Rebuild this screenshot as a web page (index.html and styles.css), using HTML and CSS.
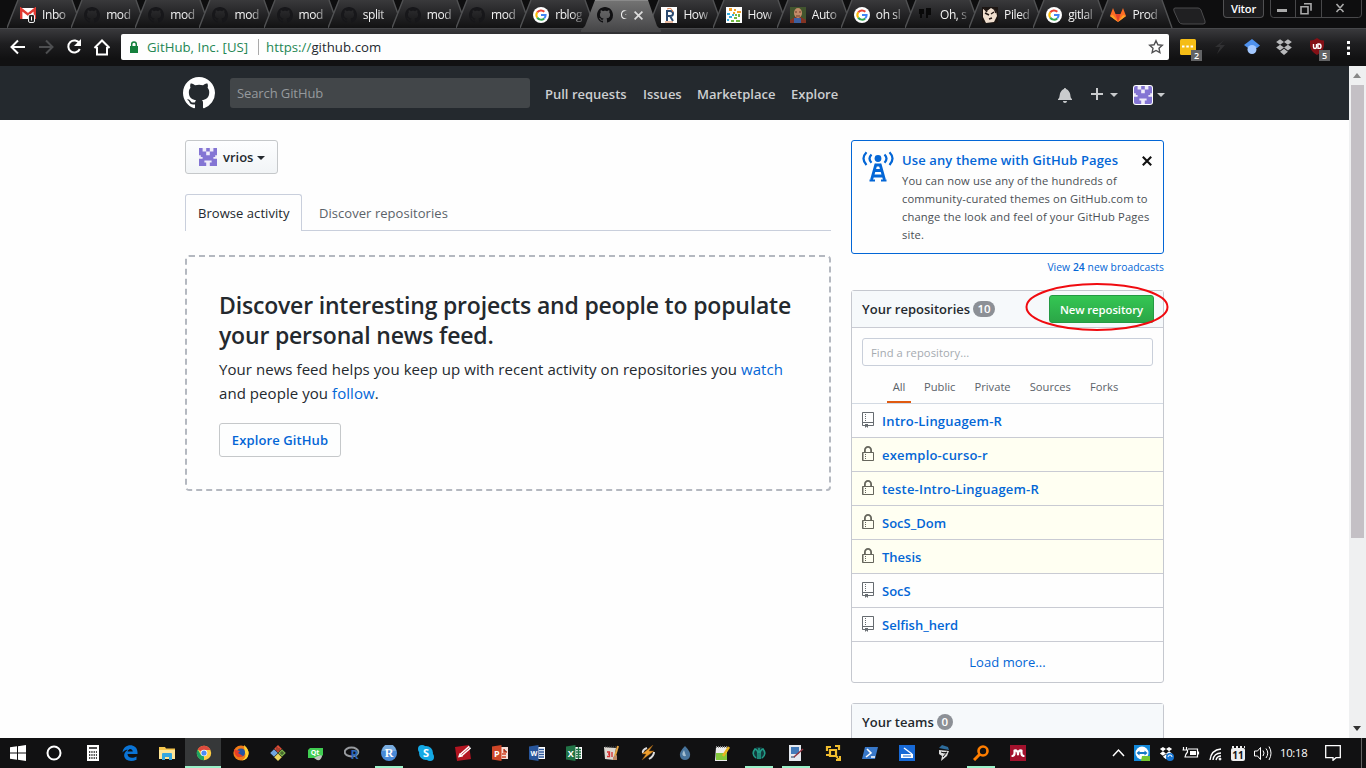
FILE: index.html
```html
<!DOCTYPE html>
<html lang="en">
<head>
<meta charset="utf-8">
<title>GitHub</title>
<link rel="stylesheet" href="styles.css">
</head>
<body>
<svg class="defs" width="0" height="0">
  <defs>
    <linearGradient id="tabfill" x1="0" y1="0" x2="0" y2="1"><stop offset="0" stop-color="#39393b"/><stop offset=".5" stop-color="#242426"/><stop offset="1" stop-color="#121213"/></linearGradient>
    <linearGradient id="activefill" x1="0" y1="0" x2="0" y2="1"><stop offset="0" stop-color="#747474"/><stop offset="1" stop-color="#454547"/></linearGradient>
  </defs>
  <symbol id="tab" viewBox="0 0 76 28"><path d="M0 28 11 0H65L75 28z" fill="url(#tabfill)"/><path d="M0 28 11 0M65 0 75 28" fill="none" stroke="#505153" stroke-width="1.4"/></symbol>
  <symbol id="tab-active" viewBox="0 0 80 32"><path d="M0 30 4 26 14 0H67L76 26 80 30v2H0z" fill="url(#activefill)"/><path d="M14 .5H67" stroke="#8a8a8a"/></symbol>
  <symbol id="mark" viewBox="0 0 16 16"><path fill="currentColor" fill-rule="evenodd" d="M8 0C3.58 0 0 3.58 0 8c0 3.54 2.29 6.53 5.47 7.59.4.07.55-.17.55-.38 0-.19-.01-.82-.01-1.49-2.01.37-2.53-.49-2.69-.94-.09-.23-.48-.94-.82-1.13-.28-.15-.68-.52-.01-.53.63-.01 1.08.58 1.23.82.72 1.21 1.87.87 2.33.66.07-.52.28-.87.51-1.07-1.78-.2-3.64-.89-3.64-3.95 0-.87.31-1.59.82-2.15-.08-.2-.36-1.02.08-2.12 0 0 .67-.21 2.2.82.64-.18 1.32-.27 2-.27.68 0 1.36.09 2 .27 1.53-1.04 2.2-.82 2.2-.82.44 1.1.16 1.92.08 2.12.51.56.82 1.27.82 2.15 0 3.07-1.87 3.75-3.65 3.95.29.25.54.73.54 1.48 0 1.07-.01 1.93-.01 2.2 0 .21.15.46.55.38A8.013 8.013 0 0 0 16 8c0-4.42-3.58-8-8-8z"/></symbol>
  <symbol id="google" viewBox="0 0 16 16"><circle cx="8" cy="8" r="8" fill="#fff"/><g fill="none" stroke-width="2"><path d="M4.2 5.4A4.6 4.6 0 0 1 11.3 4.8" stroke="#ea4335"/><path d="M4.2 5.4a4.6 4.6 0 0 0 0 5.2" stroke="#fbbc05"/><path d="M4.2 10.6a4.6 4.6 0 0 0 7 .8" stroke="#34a853"/><path d="M11.2 11.4A4.6 4.6 0 0 0 12.6 8H8" stroke="#4285f4"/></g></symbol>
  <symbol id="repo" viewBox="0 0 12 16"><path fill="#666b70" d="M4 9H3V8h1v1zm0-3H3v1h1V6zm0-2H3v1h1V4zm0-2H3v1h1V2zm8-1v12c0 .55-.45 1-1 1H6v2l-1.500-1.500L3 16v-2H1c-.55 0-1-.45-1-1V1c0-.55.45-1 1-1h10c.55 0 1 .45 1 1zm-1 10H1v2h2v-1h3v1h5v-2zm0-10H1v9h10V1z"/></symbol>
  <symbol id="lock" viewBox="0 0 12 16"><path fill="#66665c" fill-rule="evenodd" d="M4 13H3v-1h1v1zm8-6v7c0 .55-.45 1-1 1H1c-.55 0-1-.45-1-1V7c0-.55.45-1 1-1h1V4c0-2.200 1.800-4 4-4s4 1.800 4 4v2h1c.55 0 1 .45 1 1zM3.800 6h4.410V4c0-1.220-.98-2.200-2.200-2.200-1.220 0-2.200.98-2.200 2.200v2H3.800zM11 7H1.500v7H11V7zM4 8H3v1h1V8zm0 2H3v1h1v-1z"/></symbol>
  <symbol id="identicon" viewBox="0 0 10 10"><path fill="#f0edfa" d="M0 0h10v10H0z"/><path fill="#8475d4" d="M0 0h2v4H0zM8 0h2v4H8zM4 0h2v2H4zM2 2h2v2H2zM6 2h2v2H6zM1 4h3v1H1zM6 4h3v1H6zM4 4h2v2H4zM2 5h6v2H2zM0 6h3v2H0zM7 6h3v2H7zM0 8h4v2H0zM6 8h4v2H6z"/></symbol>
  <symbol id="dropbox" viewBox="0 0 16 16"><path fill="currentColor" d="M4.500 1 8 3.500 4.500 6 1 3.500zM11.500 1 15 3.500 11.500 6 8 3.500zM4.500 6 8 8.500 4.500 11 1 8.500zM11.500 6 15 8.500 11.500 11 8 8.500zM8 9.500l3.500 2.700L8 15l-3.500-2.800z"/></symbol>
</svg>

<header class="browser">
  <div class="tabstrip">
    <div class="tabs">
      <div class="tab"><svg class="shape"><use href="#tab"/></svg><svg class="fav" viewBox="0 0 16 16"><path fill="#fff" d="M0 1h16v11H0z"/><path fill="none" stroke="#e03a32" stroke-width="2.400" d="M1.200 12V2L8 7.500 14.800 2v10"/><rect x="8.500" y="7.500" width="6" height="8" rx="1.500" fill="#222" stroke="#eee"/><path stroke="#fff" d="M11.500 9.500v4"/></svg><span>Inbo</span></div>
      <div class="tab"><svg class="shape"><use href="#tab"/></svg><svg class="fav"><use href="#mark"/></svg><span>mod</span></div>
      <div class="tab"><svg class="shape"><use href="#tab"/></svg><svg class="fav"><use href="#mark"/></svg><span>mod</span></div>
      <div class="tab"><svg class="shape"><use href="#tab"/></svg><svg class="fav"><use href="#mark"/></svg><span>mod</span></div>
      <div class="tab"><svg class="shape"><use href="#tab"/></svg><svg class="fav"><use href="#mark"/></svg><span>mod</span></div>
      <div class="tab"><svg class="shape"><use href="#tab"/></svg><svg class="fav"><use href="#mark"/></svg><span>split</span></div>
      <div class="tab"><svg class="shape"><use href="#tab"/></svg><svg class="fav"><use href="#mark"/></svg><span>mod</span></div>
      <div class="tab"><svg class="shape"><use href="#tab"/></svg><svg class="fav"><use href="#mark"/></svg><span>mod</span></div>
      <div class="tab"><svg class="shape"><use href="#tab"/></svg><svg class="fav"><use href="#google"/></svg><span>rblog</span></div>
      <div class="tab active"><svg class="shape"><use href="#tab-active"/></svg><svg class="fav"><use href="#mark"/></svg><span class="short">G</span><svg class="close" viewBox="0 0 8 8"><path d="M.5.5l7 7M7.500.5l-7 7" stroke="#ddd" stroke-width="1.500"/></svg></div>
      <div class="tab"><svg class="shape"><use href="#tab"/></svg><svg class="fav" viewBox="0 0 16 16"><path fill="#fff" d="M0 0h16v16H0z"/><path fill="none" stroke="#2b4a70" stroke-width="2" d="M6 14V4h3q3 0 3 2.500T9 9H6M9 9l3 5"/><path fill="none" stroke="#d77b4a" d="M6 2q5-2 6 3M4 15h8"/></svg><span>How</span></div>
      <div class="tab"><svg class="shape"><use href="#tab"/></svg><svg class="fav" viewBox="0 0 16 16"><path fill="#fff" d="M0 0h16v16H0z"/><path fill="#f3a128" d="M3 1h3v3H3zM8 2h2v2H8zM11 4h4v2h-4zM7 5h2v2H7z"/><path fill="#39aee0" d="M1 6h3v2H1zM3 9h3v2H3zM1 12h2v2H1zM6 7h2v2H6z"/><path fill="#73b943" d="M12 7h2v3h-2zM8 10h3v2H8zM5 13h3v2H5zM10 13h4v2h-4zM9 7h2v2H9z"/></svg><span>How</span></div>
      <div class="tab"><svg class="shape"><use href="#tab"/></svg><svg class="fav" viewBox="0 0 16 16"><path fill="#42552e" d="M0 0h16v16H0z"/><path fill="#823323" d="M0 16v-3l5-3h6l5 3v3z"/><path fill="#3d60a0" d="M4 11h7v5H4z"/><ellipse cx="8" cy="6" rx="4" ry="5" fill="#c28c68"/><path stroke="#703d28" d="M5 5h2M9 5h2M6 9h4"/></svg><span>Auto</span></div>
      <div class="tab"><svg class="shape"><use href="#tab"/></svg><svg class="fav"><use href="#google"/></svg><span>oh sl</span></div>
      <div class="tab"><svg class="shape"><use href="#tab"/></svg><svg class="fav" viewBox="0 0 16 16"><path fill="#090909" d="M1 2h5v5H4v4H2V7H1zM8 1h5v7h-3v3H8z"/></svg><span>Oh, s</span></div>
      <div class="tab"><svg class="shape"><use href="#tab"/></svg><svg class="fav" viewBox="0 0 16 16"><path fill="#1b1512" d="M0 0h16v16H0z"/><path fill="#f0dfcf" d="M1 2l4 2 4-3 5 3 1 5-3 6-8 1-3-6z"/><path d="M3 6l4 2M9 7l3-2M7 12l3-1M2 1l3 4M12 1l2 5" stroke="#241a17" stroke-width="1.500"/></svg><span>Piled</span></div>
      <div class="tab"><svg class="shape"><use href="#tab"/></svg><svg class="fav"><use href="#google"/></svg><span>gitlal</span></div>
      <div class="tab"><svg class="shape"><use href="#tab"/></svg><svg class="fav" viewBox="0 0 16 16"><path fill="#fc6d26" d="M8 15 0 9 3 1l2.500 6h5L13 1l3 8z"/><path fill="#e24329" d="M8 15 5.500 7h5z"/><path fill="#fca326" d="M0 9l3-1 5 7zM16 9l-3-1-5 7z"/></svg><span>Prod</span></div>
    </div>
    <svg class="newtab" viewBox="0 0 35 18"><path d="M3 1h23q2 0 3 2l4 11q1 3-2 3H11q-3 0-4-2L2 4q-1-3 1-3z" fill="#202022" stroke="#4b4b4d"/></svg>
    <div class="user">Vitor</div>
    <svg class="winctl" viewBox="0 0 92 18"><path d="M.5 0v14q0 3.500 3 3.500h85q3 0 3-3.500V0M25.500 0v17M51.500 0v17" fill="none" stroke="#48484a"/><path fill="#aaa" d="M7 9h10v3H7z"/><path fill="none" stroke="#aaa" stroke-width="1.600" d="M34 3.800h7v7M31 6.800h7v7h-7zM66.500 4l7 8M73.500 4l-7 8"/></svg>
  </div>
  <div class="toolbar">
    <svg class="navicons" viewBox="0 0 110 26"><g fill="none" stroke="#fff" stroke-width="2"><path d="M25 13H12M18 6.500 11.500 13l6.500 6.500"/><path stroke="#4d4e50" d="M39 13h13M46 6.500l6.500 6.500-6.500 6.500"/><path d="M79.500 9.500A6 6 0 1 0 79.800 15"/><path d="M94.500 14 102 6.500l7.500 7.500M97 13v7.500h10V13"/></g><path fill="#fff" d="M81 5v7h-7z"/></svg>
    <div class="omnibox">
      <svg class="padlock" viewBox="0 0 8 12"><path fill="#15803d" d="M0 5h8v7H0z"/><path fill="none" stroke="#15803d" stroke-width="1.500" d="M1.700 5V3.200a2.300 2.300 0 0 1 4.600 0V5"/></svg>
      <span class="secure">GitHub, Inc. [US]</span><i></i><span class="url"><b>https://</b>github.com</span>
      <svg class="star" viewBox="0 0 16 16"><path d="m8 1.700 1.900 4.100 4.400.5L11 9.300l.9 4.400L8 11.500l-3.900 2.200L5 9.300l-3.300-3 4.400-.5z" fill="#fff" stroke="#505052" stroke-width="1.400"/></svg>
    </div>
    <svg class="extensions" viewBox="0 0 197 38"><rect x="11" y="11" width="16" height="16" rx="1.500" fill="#f5bd16"/><path stroke="#fff" stroke-width="2" stroke-dasharray="2.500 1.800" d="M13 18.500h12"/><rect x="22" y="22" width="11" height="11" fill="#626365"/><text x="27.500" y="31" text-anchor="middle" class="badge">2</text><path d="M55 12 46 19h5l-3 7 8-9h-5z" fill="#303032"/><path fill="#4f91ec" d="M83 11l8 6.500-3 2.500h-9l-4-3z"/><circle cx="83" cy="21.500" r="4.500" fill="#a3c8ff"/><g color="#b7b8ba"><use href="#dropbox" x="106" y="10" width="18" height="18"/></g><path fill="#841016" d="M148 10q4 3 7 2.500V18q-1 6-7 9-6-3-7-9v-5.500q3 .5 7-2.500z"/><path stroke="#fff" stroke-width="1.400" fill="none" d="M144.500 16v3q0 1.500 1.500 1.500t1.500-1.500v-3M149 16h1q2 0 2 2.200t-2 2.200h-1z"/><rect x="150" y="22" width="11" height="11" fill="#626365"/><text x="155.500" y="31" text-anchor="middle" class="badge">5</text><path fill="#fff" d="M178 13h3v3h-3zM178 18.500h3v3h-3zM178 24h3v3h-3z"/></svg>
  </div>
</header>

<div class="viewport">
  <div class="page">
    <div class="gh-header">
      <svg class="logo"><use href="#mark"/></svg>
      <div class="search">Search GitHub</div>
      <nav><a class="n1">Pull requests</a><a class="n2">Issues</a><a class="n3">Marketplace</a><a class="n4">Explore</a></nav>
      <svg class="bell" viewBox="0 0 14 16"><path fill="currentColor" d="M14 12v1H0v-1l.73-.58c.77-.77.81-2.550 1.190-4.420C2.690 3.230 6 2 6 2c0-.55.45-1 1-1s1 .45 1 1c0 0 3.390 1.230 4.160 5 .38 1.880.42 3.660 1.190 4.420l.66.58H14zm-7 4c1.110 0 2-.89 2-2H5c0 1.110.89 2 2 2z"/></svg>
      <svg class="plus" viewBox="0 0 12 12"><path stroke="currentColor" stroke-width="2" d="M6 0v12M0 6h12"/></svg><i class="caret"></i>
      <svg class="avatar"><use href="#identicon"/></svg><i class="caret"></i>
    </div>
    <div class="columns">
      <main>
        <button class="btn context"><svg class="ident"><use href="#identicon"/></svg><span>vrios</span><i class="caret"></i></button>
        <div class="tabnav"><a class="selected"><span>Browse activity</span></a><a><span>Discover repositories</span></a></div>
        <section class="blank">
          <svg class="dash" width="646" height="236"><rect x="1" y="1" width="644" height="234" rx="3"/></svg>
          <h2>Discover interesting projects and people to populate<br>your personal news feed.</h2>
          <p>Your news feed helps you keep up with recent activity on repositories you <a>watch</a><br>and people you <a>follow</a>.</p>
          <button class="btn explore">Explore GitHub</button>
        </section>
      </main>
      <aside>
        <section class="notice">
          <svg class="broadcast" viewBox="0 0 32 31"><g fill="none" stroke="#0366d6" stroke-width="2.200"><path d="M4.500 1.200Q-1.500 7.500 4.500 14M27.500 1.200Q33.500 7.500 27.500 14M9.500 3.500Q5.500 7.500 9.500 11.800M22.500 3.500Q26.500 7.500 22.500 11.800"/><path stroke-width="2.800" d="M14 13 9.500 29M18 13l4.500 16M12.500 19.500h7M11 25h10"/><path d="M7.500 29.500H13M19 29.500h5.500"/></g><circle cx="16" cy="7.500" r="3.400" fill="#0366d6"/><path fill="#0366d6" d="M13 12.500h6v3h-6z"/></svg>
          <div class="copy"><h3>Use any theme with GitHub Pages</h3><p>You can now use any of the hundreds of<br>community-curated themes on GitHub.com to<br>change the look and feel of your GitHub Pages<br>site.</p></div>
          <svg class="dismiss" viewBox="0 0 10 10"><path d="M.8.8l8.400 8.400M9.200.8.8 9.200" stroke="#111" stroke-width="2.100"/></svg>
        </section>
        <div class="more"><a>View <b>24</b> new broadcasts</a></div>
        <section class="box repos">
          <div class="box-head"><h3>Your repositories</h3><span class="count">10</span><button class="btn primary">New repository</button></div>
          <div class="filter">
            <div class="find">Find a repository...</div>
            <div class="filters"><a class="on">All</a><a>Public</a><a>Private</a><a>Sources</a><a>Forks</a></div>
          </div>
          <ul>
            <li><svg><use href="#repo"/></svg><a>Intro-Linguagem-R</a></li>
            <li class="private"><svg><use href="#lock"/></svg><a>exemplo-curso-r</a></li>
            <li class="private"><svg><use href="#lock"/></svg><a>teste-Intro-Linguagem-R</a></li>
            <li class="private"><svg><use href="#lock"/></svg><a class="tight">SocS_Dom</a></li>
            <li class="private"><svg><use href="#lock"/></svg><a class="tight">Thesis</a></li>
            <li><svg><use href="#repo"/></svg><a class="tight">SocS</a></li>
            <li><svg><use href="#repo"/></svg><a class="tight">Selfish_herd</a></li>
          </ul>
          <div class="load">Load more...</div>
          <svg class="ring" viewBox="0 0 144 50"><ellipse cx="72" cy="25" rx="70.500" ry="23" fill="none" stroke="#f00b10" stroke-width="2"/></svg>
        </section>
        <section class="box teams"><div class="box-head"><h3>Your teams</h3><span class="count zero">0</span></div></section>
      </aside>
    </div>
  </div>
  <div class="scrollbar"><svg viewBox="0 0 8 5"><path fill="#888" d="M4 0l4 5H0z"/></svg><div class="thumb"></div><svg viewBox="0 0 8 5"><path fill="#333" d="M0 0h8L4 5z"/></svg></div>
</div>

<footer class="taskbar">
  <div class="start"><svg viewBox="0 0 16 16"><path fill="#fff" d="M0 2.300 7 1.300v6.200H0zM8 1.200 16 0v7.500H8zM0 8.500h7v6.200l-7-1zM8 8.500h8V16l-8-1.200z"/></svg></div>
  <div class="cortana"><svg viewBox="0 0 16 16"><circle cx="8" cy="8" r="6.500" fill="none" stroke="#fff" stroke-width="2"/></svg></div>
  <div class="apps">
    <div><svg viewBox="0 0 16 16"><path fill="#fff" d="M2 0h12v16H2z"/><path stroke="#111" stroke-width="1.500" d="M4 3h8"/><path stroke="#111" stroke-width="1.300" stroke-dasharray="1.300 1" d="M4 7h8M4 10h8M4 13h8"/></svg></div>
    <div><svg viewBox="0 0 16 16"><path fill="#0a74d6" d="M.5 7.500C1.500-2 15-2 15.500 7v2H5.500c.3 4.500 5.500 4.500 9 2.500v3.200C8 17.800 1.500 15 2.200 9.500 2.600 6.800 5 5 7 4.500 3.500 4.500 1.500 6 .5 7.500zM5.600 6.500h5.200C10.500 3 6 3 5.600 6.500z"/></svg></div>
    <div><svg viewBox="0 0 16 16"><path fill="#f5c64e" d="M0 2h6l1 1.500h9V14H0z"/><path fill="#ffe596" d="M0 5h16v9H0z"/><path fill="#36a7df" d="M3 9q0-1 1-1h8q1 0 1 1v6h-3v-3H6v3H3z"/></svg></div>
    <div class="current run"><svg viewBox="0 0 16 16"><circle cx="8" cy="8" r="7.200" fill="#ffcd43"/><path fill="#dd4b3e" d="M8 8 1.700 4.400A7.200 7.200 0 0 1 14.500 5H8z"/><path fill="#1da462" d="M8 8v7.200A7.200 7.200 0 0 1 1.700 4.400L5 10z"/><circle cx="8" cy="8" r="3.300" fill="#fff"/><circle cx="8" cy="8" r="2.600" fill="#4c8bf5"/></svg></div>
    <div><svg viewBox="0 0 16 16"><circle cx="8" cy="8" r="7.600" fill="#f17b18"/><path fill="#ffd233" d="M11 0q5 4 4.600 9-1 6-7 6.600 6-3 3-9z"/><circle cx="8" cy="7.600" r="4" fill="#2354a4"/><path fill="#e83c27" d="M.8 4 3 5l4 1-2 2 5 3Q4 14 2 9z"/></svg></div>
    <div><svg viewBox="0 0 16 16"><path fill="#de4c36" d="m8 0 3.800 3.800L8 7.600 4.200 3.800z"/><path fill="#70a6e0" d="m4 4.200 3.800 3.800L4 11.800.2 8z"/><path fill="#7eb34e" d="m12 4.200 3.800 3.800-3.800 3.800L8.200 8z"/><path fill="#ead55d" d="m8 8.400 3.800 3.800L8 16l-3.800-3.800z"/><path stroke="#5e2b22" stroke-width=".8" d="M7 2v4M9 3v3"/><path stroke="#28411b" stroke-width=".8" d="M12 6v4M10 8h4"/></svg></div>
    <div><svg viewBox="0 0 16 16"><path fill="#41cd52" d="M3 3h13v7l-3 3H1V5z"/><path fill="#bfc5bd" d="M7 13q7-4 8-2-1 5-5 4z"/><text x="8" y="10" class="glyph small">Qt</text></svg></div>
    <div><svg viewBox="0 0 16 16"><ellipse cx="7.500" cy="7" rx="6.800" ry="4.500" fill="none" stroke="#979a9e" stroke-width="2"/><text x="10.500" y="14" class="glyph rlang">R</text></svg></div>
    <div class="run"><svg viewBox="0 0 16 16"><circle cx="8" cy="8" r="8" fill="#4889d7"/><path fill="#79acdf" d="M1 6a7 7 0 0 1 14 0z"/><text x="8" y="12" class="glyph serif">R</text></svg></div>
    <div><svg viewBox="0 0 16 16"><circle cx="8" cy="8" r="7" fill="#14a9e5"/><circle cx="4" cy="4" r="4" fill="#14a9e5"/><circle cx="12" cy="12" r="4" fill="#14a9e5"/><text x="8" y="12" class="glyph">S</text></svg></div>
    <div><svg viewBox="0 0 16 16"><path fill="#b21420" d="M0 2 14 0l2 14-14 2z"/><path stroke="#fff" stroke-width="3.600" d="m15 2-9 8"/><path fill="#fff" d="m4.500 8 3.500 3.500-5 1z"/><path stroke="#b21420" stroke-width=".8" d="m14.500 2.500-8 7"/></svg></div>
    <div><svg viewBox="0 0 16 16"><path fill="#f4ded8" d="M8 2h8v12H8z"/><path stroke="#cf4527" stroke-width="1.500" d="M10 9h4M10 12h4M12 4v3h3"/><path fill="#ce4627" d="M0 1.500 9.500 0v16L0 14.500z"/><text x="4.800" y="11.500" class="glyph office">P</text></svg></div>
    <div><svg viewBox="0 0 16 16"><path fill="#fff" d="M8 2h8v12H8z"/><path stroke="#2b579a" stroke-width="1.300" d="M10 4.500h5M10 7h5M10 9.500h5M10 12h5"/><path fill="#28569c" d="M0 1.500 9.500 0v16L0 14.500z"/><text x="4.800" y="11" class="glyph word">W</text></svg></div>
    <div><svg viewBox="0 0 16 16"><path fill="#fff" d="M8 2h8v12H8z"/><path stroke="#217346" stroke-width="1.300" d="M10 4.500h5M10 7h5M10 9.500h5M10 12h5M12.500 2v12"/><path fill="#217346" d="M0 1.500 9.500 0v16L0 14.500z"/><text x="4.800" y="11.500" class="glyph office">X</text></svg></div>
    <div><svg viewBox="0 0 16 16"><path fill="#ddd9d2" d="m1 2 12 1-2 12-9-1z"/><path stroke="#555" stroke-dasharray="1 1" d="M2 2h11"/><path stroke="#e8a540" stroke-width="2" d="m15 1-3 10"/><path stroke="#d52e30" stroke-width="1.300" fill="none" d="M4 7h2.500v2H5h1.500v2.500H4M9 7v5"/><path fill="#bf8a66" d="m10 12 4-2v5h-4z"/></svg></div>
    <div><svg viewBox="0 0 16 16"><path fill="none" stroke="#ddd" stroke-width="2" d="M7 3q-5 2-4 5M9 14q5-3 5-7"/><path fill="#ef9f2d" stroke="#7b4a13" stroke-width=".5" d="m13 0-11 9h4l-4 6 12-9H9z"/></svg></div>
    <div><svg viewBox="0 0 16 16"><path fill="#48749c" d="M8 1q6 6 5 10-1 4-5 4t-5-4Q2 7 8 1z"/><path fill="#a5bfd1" d="M7 5q-4 7 2 6z"/></svg></div>
    <div><svg viewBox="0 0 16 16"><path fill="#eee" d="M2 2h11v14H1z"/><path stroke="#888" stroke-dasharray="1 1" stroke-width="2" d="M2 2h11"/><path fill="#83c83c" d="M2 8h11v7H2z"/><path stroke="#e8b520" stroke-width="2.500" d="m15 2-6 9"/></svg></div>
    <div class="run"><svg viewBox="0 0 16 16"><circle cx="8" cy="8" r="6.300" fill="#12383b"/><path fill="none" stroke="#229b86" stroke-width="1.600" d="M5 13Q0 9 4 4q3 1 3 5v5M11 13q5-4 1-9-3 1-3 5v5M8 3v5"/></svg></div>
    <div class="run"><svg viewBox="0 0 16 16"><path fill="#e5e9ef" d="M1 0h12v16H1z"/><path fill="#427ab9" d="M3 2h8v7H3z"/><path stroke="#17345c" d="M3 12h4"/><path stroke="#923742" stroke-width="1.500" d="m15 4-9 8"/></svg></div>
    <div><svg viewBox="0 0 16 16"><path fill="none" stroke="#f2be2e" stroke-width="2.200" d="M5 5h6v6H5zM2 6V2h4M10 1h4v4M11 15h4v-4M11 11l4 4M1 10h4"/></svg></div>
    <div><svg viewBox="0 0 16 16"><path fill="#3878c9" d="M3 2h13l-3 12H0z"/><path fill="none" stroke="#fff" stroke-width="1.600" d="m5 4 4 4-5 4M9 12h4"/></svg></div>
    <div><svg viewBox="0 0 16 16"><path fill="#1769d6" d="M0 0h16v16H0z"/><path fill="none" stroke="#fff" stroke-width="1.400" d="m5 3 8 6"/><path fill="#fff" d="M2 9h12v4H2z"/><path stroke="#1769d6" d="M4 11h8"/></svg></div>
    <div><svg viewBox="0 0 16 16"><path fill="#2d6c9b" d="M6 0l6 2 1 3-10-2z"/><path fill="#dedede" d="M3 5l10 1-2 5-6 5 1-5-3-2z"/><path stroke="#171717" d="M5 7l3 1 3-1M7 12l4-5"/></svg></div>
    <div class="run"><svg viewBox="0 0 16 16"><circle cx="10" cy="6" r="4.500" fill="none" stroke="#ff7e00" stroke-width="2.600"/><path stroke="#ff7e00" stroke-width="3" d="m7 9-6 6"/></svg></div>
    <div><svg viewBox="0 0 16 16"><path fill="#a3122d" d="M0 0h16v16H0z"/><path fill="none" stroke="#fff" stroke-width="2.200" stroke-linecap="round" d="M2.500 11q2.500-.5 2-4.500M8 9.500v0M13.500 11q-2.500-.5-2-4.500M4.500 5.500Q8 5 8 9.500 8 5 11.500 5.500"/></svg></div>
  </div>
  <svg class="tray" viewBox="0 0 160 30"><g fill="none" stroke="#fff" stroke-width="1.500"><path d="m1 18 5.500-6 5.500 6"/></g><rect x="22" y="7" width="16" height="16" fill="#1289db"/><circle cx="30" cy="15" r="6.500" fill="#fff"/><path fill="#1478c7" d="m24.500 15 3-2.500V14h5v-1.500l3 2.500-3 2.500V16h-5v1.500z"/><path fill="#75c831" d="M30 18h8v5h-9z"/><g color="#fff"><use href="#dropbox" x="47" y="8" width="14" height="14"/></g><circle cx="58" cy="19" r="4" fill="#1875d1"/><path fill="none" stroke="#fff" d="M56 19a2 2 0 0 1 4 0"/><g fill="none" stroke="#fff"><path stroke-width="1.200" d="M76 11h9.500v8H75M86.500 13.500v3M71.500 9v3M74.500 9v3M70.500 12h5v2q-2.500 3-2.500 5h2"/><path fill="#fff" stroke="none" d="M78 13h6v4h-6z"/><path d="M98 22q1-10 11-11M101 22q1-7 8-7M104 22q1-4 5-4" stroke-width="1.400"/><circle cx="108" cy="21" r="1" fill="#fff"/><path d="M142.500 13h3l3-3.500v12l-3-3.500h-3zM151 12.500q2 2.500 0 5.500M154 10.500q3.500 4.500 0 9.500M157 8.500q4 6.500 0 13.500"/></g><rect x="119" y="10" width="14" height="13" rx="2" fill="#eee"/><path stroke="#eee" stroke-width="2" stroke-dasharray="2 2" d="M120 9h13"/><text x="126" y="21" text-anchor="middle" class="date">11</text></svg>
  <span class="clock">10:18</span>
  <svg class="action" viewBox="0 0 16 16"><path fill="none" stroke="#fff" stroke-width="1.300" d="M.7.7h14.600v12H11l-3 2.600V12.700H.7z"/></svg>
  <i class="desktop"></i>
</footer>
</body>
</html>
```

FILE: styles.css
```css
* { box-sizing: border-box; }
body { margin: 0; width: 1366px; height: 768px; overflow: hidden; background: #fefefe; color: #24292e; font: 13px/20px "Open Sans", sans-serif; display: flex; flex-direction: column; }
svg { display: block; flex: none; }
.defs { position: absolute; }
h2, h3, p, ul { margin: 0; padding: 0; }
ul { list-style: none; }
a { color: #0366d6; white-space: nowrap; }
button { font: inherit; }
span { white-space: nowrap; }

.browser { height: 66px; flex: none; background: #111112; }
.tabstrip { height: 28px; display: flex; background: #0e0e0f; }
.tabs { display: flex; padding-left: 7px; width: 1172px; flex: none; }
.tab { position: relative; width: 64.15px; flex: none; height: 28px; display: flex; align-items: center; padding: 2px 0 0 13px; }
.shape { position: absolute; left: 0; top: 0; width: 76px; height: 28px; }
.fav { position: relative; width: 16px; height: 16px; color: #17171a; }
.active .fav { color: #101012; }
.tab span { position: relative; margin-left: 6px; color: #f2f2f2; font-size: 12px; letter-spacing: -.4px; -webkit-mask-image: linear-gradient(90deg, #000 16px, rgba(0,0,0,.25) 27px); mask-image: linear-gradient(90deg, #000 16px, rgba(0,0,0,.25) 27px); }
.tab.active { z-index: 2; }
.active .shape { left: -3px; width: 80px; height: 32px; }
.tab .short { margin-left: 7px; width: 9px; -webkit-mask-image: linear-gradient(90deg, #000 4px, transparent 7px); mask-image: linear-gradient(90deg, #000 4px, transparent 7px); }
.close { position: relative; width: 9px; height: 9px; margin-left: 5px; }
.newtab { width: 35px; height: 18px; margin: 7px 16px 0 0; }
.user { width: 41px; height: 18px; border: 1px solid #505052; border-top: 0; border-radius: 0 0 4px 4px; background: #1b1b1d; color: #fff; font: 600 11.2px/18px "Open Sans", sans-serif; text-align: center; letter-spacing: -.2px; }
.winctl { width: 92px; height: 18px; margin-left: 6px; }
.toolbar { height: 38px; border-top: 1px solid #47484b; background: linear-gradient(#39393c, #1e1e20 40%, #111112 80%); display: flex; align-items: flex-start; padding-top: 5px; }
.navicons { width: 110px; height: 26px; margin-right: 11px; }
.omnibox { width: 1048px; height: 26px; background: #fefefe; border-radius: 2px; display: flex; align-items: center; padding-left: 9px; flex: none; font-size: 13.2px; }
.padlock { width: 8px; height: 12px; margin-right: 9px; }
.secure { color: #248653; width: 101px; letter-spacing: .02px; }
.omnibox i { width: 1px; height: 16px; margin: 0 7px 0 10px; background: #aaa; }
.url { letter-spacing: .05px; }
.url b { font-weight: 400; color: #248653; }
.star { width: 16px; height: 16px; margin: 0 5px 0 auto; }
.extensions { width: 197px; height: 38px; margin-top: -6px; }
.badge { font: 600 9px "Open Sans", sans-serif; fill: #fff; }

.viewport { height: 672px; flex: none; display: flex; overflow: hidden; }
.page { width: 1349px; height: 672px; overflow: hidden; }
.gh-header { height: 54px; background: #24292e; display: flex; align-items: center; padding-left: 183px; color: #c9cbcd; }
.logo { width: 32px; height: 32px; margin-right: 15px; color: #fff; }
.search { width: 300px; height: 30px; border-radius: 3px; background: #424649; color: #969a9d; line-height: 30px; padding-left: 7px; margin-right: 15px; letter-spacing: -.1px; }
.gh-header nav { display: flex; width: 513px; padding-top: 2px; }
.gh-header nav a { color: #cdcfd1; font-weight: 600; }
.n1 { width: 98px; } .n2 { width: 54px; } .n3 { width: 94px; }
.bell { width: 14px; height: 16px; margin: 4px 19px 0 0; }
.plus { width: 12px; height: 12px; margin: 2px 7px 0 0; }
.caret { width: 0; height: 0; border: 4px solid transparent; border-top-color: currentColor; border-bottom: 0; }
.gh-header .caret { margin-top: 3px; }
.avatar { width: 20px; height: 20px; padding: 1px; border-radius: 3px; background: #fff; margin: 3px 4px 0 15px; }
.columns { display: flex; gap: 20px; padding: 20px 0 0 185px; }
main { width: 646px; }
aside { width: 313px; }
.btn { height: 34px; border: 1px solid #c5c8ca; border-radius: 3px; padding: 0; background: #fdfefe; font-weight: 600; white-space: nowrap; color: #24292e; }
.context { width: 93px; display: flex; align-items: center; padding-left: 13px; background: linear-gradient(#fdfeff, #f1f4f6); }
.ident { width: 18px; height: 18px; margin-right: 6px; }
.context .caret { margin: 1px 0 0 4px; }
.tabnav { height: 37px; margin-top: 20px; border-bottom: 1px solid #c9cfdc; display: flex; }
.tabnav a { color: #5b6269; padding: 9px 0 0 17px; letter-spacing: .05px; }
.tabnav .selected { width: 117px; height: 37px; padding: 8px 0 0 12px; color: #24292e; background: #fefefe; border: 1px solid #c9cfdc; border-bottom: 0; border-radius: 3px 3px 0 0; }
.blank { position: relative; height: 236px; margin-top: 24px; padding: 35px 34px 0; }
.dash { position: absolute; inset: 0; fill: none; stroke: #b4b8c0; stroke-width: 2; stroke-dasharray: 6 4; }
h2 { font-size: 23px; line-height: 30px; font-weight: 600; letter-spacing: -.19px; white-space: nowrap; }
.blank p { font-size: 15px; line-height: 24px; margin-top: 7px; letter-spacing: .06px; white-space: nowrap; }
.explore { width: 122px; margin-top: 18px; color: #0366d6; letter-spacing: .1px; }
.notice { height: 114px; border: 1px solid #0366d6; border-radius: 3px; padding: 9px 11px 0 10px; display: flex; }
.broadcast { width: 32px; height: 31px; margin: 1px 8px 0 0; }
.copy { width: 249px; white-space: nowrap; }
h3 { font-size: 13px; line-height: 20px; font-weight: 600; white-space: nowrap; }
.notice h3 { color: #0366d6; letter-spacing: .12px; }
.notice p { font-size: 11.2px; line-height: 18px; margin-top: 2px; color: #4a4f54; letter-spacing: .14px; }
.dismiss { width: 10px; height: 10px; margin: 6px 0 0 -9px; }
.more { height: 36px; padding-top: 3px; text-align: right; font-size: 10.3px; letter-spacing: .06px; }
.more b { font-weight: 600; }
.box { position: relative; border: 1px solid #c5c8cf; border-radius: 3px; }
.repos { height: 393px; }
.box-head { height: 37px; border-bottom: 1px solid #c9cbd3; background: #f6f9fb; display: flex; align-items: center; padding: 0 9px 0 10px; }
.count { width: 22px; height: 16px; margin-left: 3px; border-radius: 8px; background: #8c9096; color: #fff; font-weight: 600; font-size: 11.5px; line-height: 16px; text-align: center; }
.count.zero { width: 16px; }
.primary { width: 105px; height: 28px; margin-left: auto; border-color: #239943; background: linear-gradient(#34c653, #2ba647); color: #fff; font-size: 11.4px; letter-spacing: -.1px; padding-top: 1px; }
.filter { height: 76px; padding: 10px 10px 0; border-bottom: 1px solid #d3dae3; }
.find { height: 28px; border: 1px solid #c9cfda; border-radius: 3px; padding-left: 8px; line-height: 27px; font-size: 11.2px; letter-spacing: .08px; color: #a5aab0; }
.filters { display: flex; gap: 19px; height: 38px; padding: 11px 0 0 25px; font-size: 11.2px; }
.filters a { color: #5b6269; }
.filters .on { border-bottom: 2px solid #e05a10; width: 24px; height: 26px; text-align: center; margin-right: -6px; }
.repos li { height: 34px; border-bottom: 1px solid #c9cbd3; display: flex; align-items: center; padding-left: 10px; font-weight: 600; letter-spacing: .2px; }
.repos .tight { letter-spacing: 0; }
.repos li svg { width: 12px; height: 16px; margin: -2px 8px 0 0; }
.private { background: #fffff2; }
.load { color: #0366d6; text-align: center; line-height: 41px; letter-spacing: .05px; }
.ring { position: absolute; width: 144px; height: 50px; left: 173px; top: -9px; }
.teams { height: 60px; margin-top: 20px; }
.scrollbar { width: 17px; padding: 0 2px 0 1px; background: #eff0f1; display: flex; flex-direction: column; align-items: center; justify-content: space-between; }
.scrollbar svg { width: 8px; height: 5px; margin: 7px 0 7px; }
.thumb { width: 13px; height: 455px; background: #c4c0c5; margin-bottom: 181px; }

.taskbar { height: 30px; flex: none; background: #111112; display: flex; align-items: center; color: #fff; }
.start { width: 36px; padding-left: 10px; } .cortana { width: 38px; padding-left: 10px; }
.start svg, .cortana svg, .apps svg { width: 16px; height: 16px; }
.apps { display: flex; height: 30px; width: 1038px; flex: none; }
.apps div { width: 37px; height: 30px; padding: 7px 0 0 11px; position: relative; }
.apps .current { background: #363839; background-clip: padding-box; border-right: 1px solid transparent; }
.apps .run::after { content: ""; position: absolute; left: 5px; bottom: 0; width: 28px; height: 2px; background: #9af0c8; }
.apps .current::after { left: 0; width: 36px; }
.glyph { font: 700 11px "Open Sans", sans-serif; fill: #fff; text-anchor: middle; }
.small { font-size: 7px; } .rlang { font-size: 12px; fill: #2c65b6; } .serif { font-family: "Liberation Serif", serif; font-size: 12px; } .office { font-size: 9px; } .word { font-size: 7px; }
.date { font: 700 10px "Open Sans", sans-serif; fill: #151515; }
.tray { width: 160px; height: 30px; }
.clock { width: 45px; padding-left: 8px; font-size: 11.3px; letter-spacing: -.3px; }
.action { width: 16px; height: 16px; margin-left: 8px; }
.desktop { width: 1px; height: 30px; margin-left: 20px; background: #636363; }
```
